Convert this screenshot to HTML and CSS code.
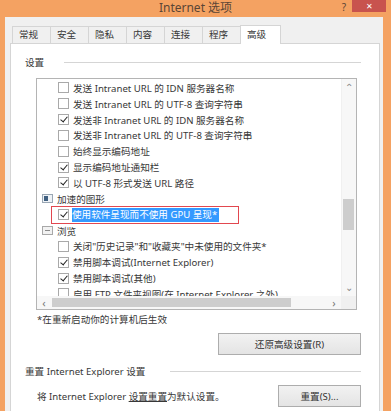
FILE: index.html
```html
<!DOCTYPE html>
<html lang="zh-CN">
  <head>
    <meta charset="UTF-8" />
    <title>Internet 选项</title>
    <link rel="stylesheet" href="styles.css">
  </head>
  <body>
    <div class="window">
      <!-- title bar -->
      <div class="titlebar">
        <div></div>
        <div class="title">Internet 选项</div>
        <div class="title-btns">
          <span class="help">?</span>
          <span class="close">✕</span>
        </div>
      </div>

      <div class="dialog">
        <div class="tabs">
          <div class="tab">常规</div>
          <div class="tab">安全</div>
          <div class="tab">隐私</div>
          <div class="tab">内容</div>
          <div class="tab">连接</div>
          <div class="tab">程序</div>
          <div class="tab active">高级</div>
        </div>

        <div class="panel">
          <div class="section-head">
            <span>设置</span>
            <div class="rule"></div>
          </div>

          <div class="listbox">
            <div class="list-items">
              <div class="row item"><i class="cb"></i>发送 Intranet URL 的 IDN 服务器名称</div>
              <div class="row item"><i class="cb"></i>发送 Intranet URL 的 UTF-8 查询字符串</div>
              <div class="row item"><i class="cb on"></i>发送非 Intranet URL 的 IDN 服务器名称</div>
              <div class="row item"><i class="cb"></i>发送非 Intranet URL 的 UTF-8 查询字符串</div>
              <div class="row item"><i class="cb"></i>始终显示编码地址</div>
              <div class="row item"><i class="cb on"></i>显示编码地址通知栏</div>
              <div class="row item"><i class="cb on"></i>以 UTF-8 形式发送 URL 路径</div>
              <div class="row group"><i class="grp-icon gfx"></i>加速的图形</div>
              <div class="row item">
                <span class="marked"><i class="cb on"></i><span class="sel">使用软件呈现而不使用 GPU 呈现*</span></span>
              </div>
              <div class="row group"><i class="grp-icon browse"></i>浏览</div>
              <div class="row item"><i class="cb"></i>关闭"历史记录"和"收藏夹"中未使用的文件夹*</div>
              <div class="row item"><i class="cb on"></i>禁用脚本调试(Internet Explorer)</div>
              <div class="row item"><i class="cb on"></i>禁用脚本调试(其他)</div>
              <div class="row item"><i class="cb"></i>启用 FTP 文件夹视图(在 Internet Explorer 之外)</div>
            </div>

            <div class="vscroll">
              <span class="arrow">&#8963;</span>
              <div class="vtrack"><div class="vthumb"></div></div>
              <span class="arrow">&#8964;</span>
            </div>

            <div class="hscroll">
              <span class="arrow">&lsaquo;</span>
              <div class="htrack"><div class="hthumb"></div></div>
              <span class="arrow">&rsaquo;</span>
            </div>
            <div class="corner"></div>
          </div>

          <div class="note">*在重新启动你的计算机后生效</div>

          <div class="btn-row">
            <button class="btn wide">还原高级设置(R)</button>
          </div>

          <div class="section-head reset-head">
            <span>重置 Internet Explorer 设置</span>
            <div class="rule"></div>
          </div>

          <div class="reset-row">
            <span>将 Internet Explorer <u>设置重置</u>为默认设置。</span>
            <button class="btn">重置(S)...</button>
          </div>
        </div>
      </div>
    </div>
  </body>
</html>
```

FILE: styles.css
```css
* {
  margin: 0;
  padding: 0;
  box-sizing: border-box;
}

body {
  font-family: "Noto Sans", "Noto Sans CJK SC", sans-serif;
  font-size: 9.6px;
  color: #383838;
  background: #f4a262;
}

.window {
  width: 391px;
  height: 411px;
  overflow: hidden;
  background: #f4a262;
  display: flex;
  flex-direction: column;
}

/* title bar */
.titlebar {
  height: 17px;
  display: grid;
  grid-template-columns: 1fr auto 1fr;
  align-items: start;
}

.title {
  font-size: 12px;
  line-height: 16px;
  color: #5a4535;
}

.title-btns {
  display: flex;
  justify-content: flex-end;
  align-items: flex-start;
  padding-right: 5px;
}

.help {
  font-size: 10px;
  line-height: 14px;
  color: #5a4535;
  margin-right: 6px;
}

.close {
  width: 34px;
  height: 12px;
  background: #c8534e;
  color: #fff;
  font-size: 8px;
  line-height: 12px;
  text-align: center;
}

/* dialog body */
.dialog {
  flex: 1;
  margin: 0 8px 0 5px;
  background: #f0f0f0;
  padding-top: 8px;
  display: flex;
  flex-direction: column;
}

.tabs {
  display: flex;
  align-items: flex-end;
  margin-left: 7px;
  position: relative;
  z-index: 1;
}

.tab {
  width: 39px;
  height: 17px;
  margin-right: -1px;
  border: 1px solid #d5d5d5;
  border-bottom: none;
  background: #f0f0f0;
  padding-left: 6px;
  line-height: 15px;
}

.tab.active {
  width: 41px;
  height: 19px;
  background: #fff;
  margin-bottom: -1px;
  padding-top: 1px;
}

.panel {
  flex: 1;
  margin: 0 3px 0 5px;
  background: #fff;
  border: 1px solid #d5d5d5;
  border-bottom: none;
  padding: 0 18px 0 0;
  display: flex;
  flex-direction: column;
}

.section-head {
  margin-top: 12px;
  height: 13px;
  display: flex;
  align-items: center;
  padding-left: 14px;
  line-height: 13px;
}

.section-head .rule {
  flex: 1;
  height: 1px;
  background: #d5d5d5;
  margin-left: 20px;
}

/* list box */
.listbox {
  margin: 9px 4px 0 25px;
  height: 232px;
  border: 1px solid #b4b4b4;
  display: grid;
  grid-template-columns: 1fr 15px;
  grid-template-rows: 1fr 13px;
}

.list-items {
  overflow: hidden;
  padding-top: 1px;
}

.row {
  height: 15.85px;
  display: flex;
  align-items: center;
  white-space: nowrap;
}

.row.item {
  padding-left: 21px;
}

.row.group {
  padding-left: 5px;
}

.cb {
  width: 11px;
  height: 11px;
  border: 1px solid #a9a9a9;
  background: #fff;
  margin-right: 4px;
  flex: none;
  position: relative;
}

.cb.on::after {
  content: "";
  position: absolute;
  left: 3px;
  top: 0px;
  width: 3px;
  height: 6px;
  border-right: 1.6px solid #222;
  border-bottom: 1.6px solid #222;
  transform: rotate(40deg);
}

.grp-icon {
  width: 11px;
  height: 9px;
  margin-right: 4px;
  flex: none;
  border: 1px solid #9aa7b4;
  background: #eef2f6;
  position: relative;
}

.grp-icon.gfx::before {
  content: "";
  position: absolute;
  left: 1px;
  top: 1px;
  width: 4px;
  height: 5px;
  background: #3f5f80;
}

.grp-icon.browse {
  border-color: #a8a8a8;
  background: #f2f2f2;
}

.grp-icon.browse::before {
  content: "";
  position: absolute;
  left: 2px;
  right: 2px;
  top: 3px;
  height: 1px;
  background: #8a8a8a;
}

.marked {
  display: flex;
  align-items: center;
  position: relative;
}

.marked::after {
  content: "";
  position: absolute;
  left: -7px;
  right: -20px;
  top: -2px;
  bottom: -2px;
  border: 1px solid #e2474f;
}

.sel {
  background: #3399ff;
  color: #fff;
  padding: 1px 2px 1px 0;
  margin-left: -1px;
  line-height: 12px;
}

/* scrollbars */
.vscroll {
  grid-row: 1;
  grid-column: 2;
  background: #f7f7f7;
  border-left: 1px solid #f0f0f0;
  display: flex;
  flex-direction: column;
  align-items: center;
}

.vscroll .arrow {
  height: 17px;
  line-height: 17px;
  color: #8a8a8a;
  font-size: 10px;
}

.vtrack {
  flex: 1;
  width: 100%;
  padding: 103px 2px 0 1px;
}

.vthumb {
  height: 31px;
  background: #cdcdcd;
}

.hscroll {
  grid-row: 2;
  grid-column: 1;
  background: #f7f7f7;
  display: flex;
  align-items: center;
}

.hscroll .arrow {
  width: 14px;
  text-align: center;
  color: #777;
  font-size: 11px;
  line-height: 12px;
}

.htrack {
  flex: 1;
  height: 100%;
  padding: 2px 36px 2px 1px;
}

.hthumb {
  height: 100%;
  background: #cdcdcd;
}

.corner {
  grid-row: 2;
  grid-column: 2;
  background: #f0f0f0;
}

.note {
  margin: 3px 0 0 26px;
  line-height: 14px;
}

.btn-row {
  display: flex;
  justify-content: flex-end;
  margin-top: 6px;
}

.btn {
  font-family: inherit;
  font-size: inherit;
  color: #333;
  height: 22px;
  width: 83px;
  border: 1px solid #adadad;
  background: linear-gradient(#f2f2f2, #e4e4e4);
}

.btn.wide {
  width: 143px;
}

.reset-head {
  margin-top: 10px;
}

.reset-head .rule {
  margin-left: 25px;
}

.reset-row {
  margin: 7px 0 0 26px;
  display: flex;
  justify-content: space-between;
  align-items: center;
}

.reset-row u {
  text-decoration: underline;
}
```
